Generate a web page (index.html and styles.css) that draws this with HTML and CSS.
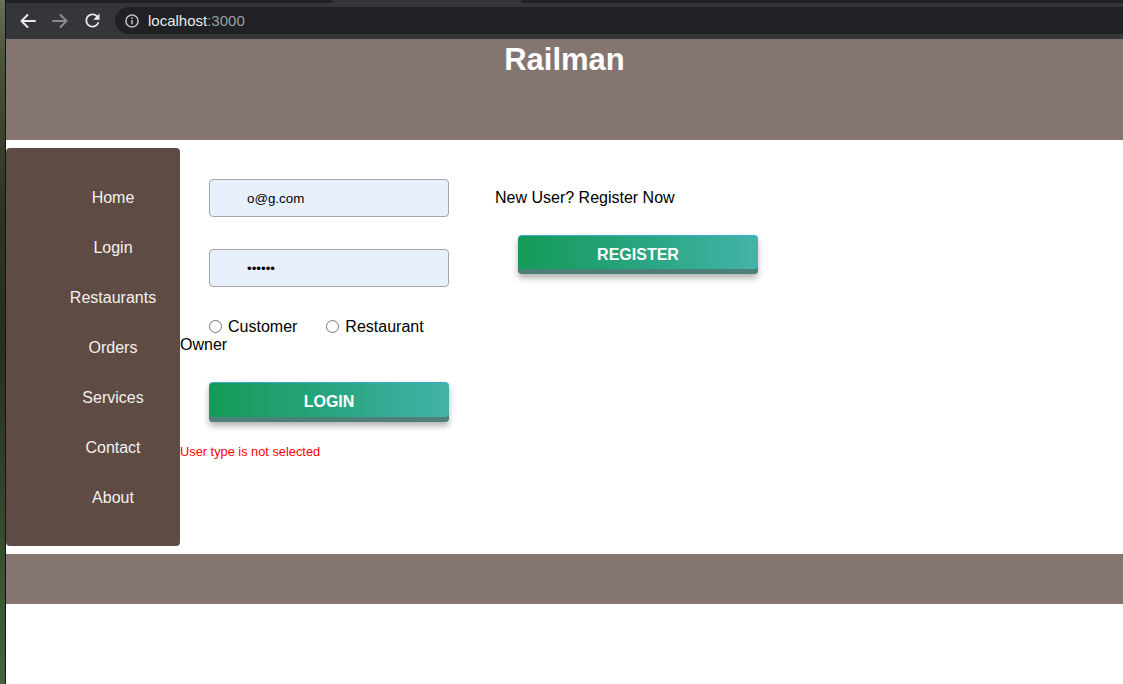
FILE: index.html
```html
<!DOCTYPE html>
<html lang="en">
<head>
<meta charset="utf-8">
<title>Railman</title>
<link rel="stylesheet" href="styles.css">
</head>
<body>
<div class="desktop">
  <div class="wallpaper"></div>
  <div class="window">
    <div class="tabstrip">
      <div class="tab-dark tab-left"></div>
      <div class="tab-active"></div>
      <div class="tab-dark tab-right"></div>
    </div>
    <div class="toolbar">
      <div class="tb-btn">
        <svg width="20" height="20" viewBox="0 0 20 20"><path d="M17 10H3.5M9.5 4L3.5 10l6 6" fill="none" stroke="#e8eaed" stroke-width="2" stroke-linecap="round" stroke-linejoin="round"/></svg>
      </div>
      <div class="tb-btn">
        <svg width="20" height="20" viewBox="0 0 20 20"><path d="M3 10h13.5M10.5 4l6 6-6 6" fill="none" stroke="#8a8b8e" stroke-width="2" stroke-linecap="round" stroke-linejoin="round"/></svg>
      </div>
      <div class="tb-btn">
        <svg width="21" height="21" viewBox="0 0 24 24"><path d="M17.65 6.35C16.2 4.9 14.21 4 12 4c-4.42 0-7.99 3.58-7.99 8s3.57 8 7.99 8c3.73 0 6.84-2.55 7.73-6h-2.08c-.82 2.33-3.04 4-5.65 4-3.31 0-6-2.69-6-6s2.69-6 6-6c1.66 0 3.14.69 4.22 1.78L13 11h7V4l-2.35 2.35z" fill="#e8eaed"/></svg>
      </div>
      <div class="omnibox">
        <svg class="info" width="14" height="14" viewBox="0 0 14 14"><circle cx="7" cy="7" r="6.1" fill="none" stroke="#bdc1c6" stroke-width="1.5"/><rect x="6.25" y="6" width="1.5" height="4.3" fill="#bdc1c6"/><circle cx="7" cy="4.2" r="0.9" fill="#bdc1c6"/></svg>
        <span class="url-host">localhost</span><span class="url-port">:3000</span>
      </div>
    </div>
    <div class="page">
      <header class="site-header">
        <h1 class="brand">Railman</h1>
      </header>
      <div class="main">
        <nav class="sidebar">
          <ul class="nav-list">
            <li>Home</li>
            <li>Login</li>
            <li>Restaurants</li>
            <li>Orders</li>
            <li>Services</li>
            <li>Contact</li>
            <li>About</li>
          </ul>
        </nav>
        <div class="login-col">
          <input class="field" type="text" value="o@g.com">
          <input class="field field-gap" type="password" value="123456">
          <div class="radio-group"><input class="radio r1" type="radio" name="ut">Customer<input class="radio r2" type="radio" name="ut">Restaurant Owner</div>
          <button class="btn btn-login">LOGIN</button>
          <div class="error">User type is not selected</div>
        </div>
        <div class="register-col">
          <div class="register-text">New User? Register Now</div>
          <button class="btn btn-register">REGISTER</button>
        </div>
      </div>
      <footer class="site-footer"></footer>
    </div>
  </div>
</div>
</body>
</html>
```
FILE: styles.css
```css
* { box-sizing: border-box; }

html, body {
  margin: 0;
  padding: 0;
  background: #ffffff;
  font-family: "Liberation Sans", Arial, sans-serif;
}

.desktop {
  display: flex;
  width: 1123px;
  height: 684px;
  overflow: hidden;
}

.wallpaper {
  width: 6px;
  flex: none;
  background: linear-gradient(180deg, #68705c 0%, #4a5638 8%, #2c3522 30%, #26301e 50%, #33442a 72%, #3d5a33 90%, #45653a 100%);
  border-right: 1px solid #141414;
}

.window {
  flex: 1;
  display: flex;
  flex-direction: column;
  overflow: hidden;
  background: #ffffff;
}

.tabstrip {
  height: 3px;
  display: flex;
  background: #35363a;
}

.tab-dark {
  background: #202124;
  height: 3px;
}

.tab-left {
  width: 327px;
  border-radius: 0 0 5px 0;
}

.tab-active {
  width: 188px;
}

.tab-right {
  flex: 1;
  border-radius: 0 0 0 5px;
}

.toolbar {
  height: 36px;
  padding: 0 0 1px 6px;
  background: #35363a;
  display: flex;
  align-items: center;
}

.tb-btn {
  width: 32px;
  height: 28px;
  display: flex;
  align-items: center;
  justify-content: center;
  flex: none;
}

.omnibox {
  flex: 1;
  margin-left: 7px;
  margin-right: -30px;
  height: 27px;
  border-radius: 14px;
  background: #202124;
  display: flex;
  align-items: center;
  padding-left: 10px;
  font-size: 15px;
}

.info {
  margin-right: 9px;
  flex: none;
}

.url-host { color: #e8eaed; }
.url-port { color: #9aa0a6; }

.page {
  flex: 1;
  background: #ffffff;
}

.site-header {
  height: 101px;
  background: #857571;
  padding-top: 3px;
}

.brand {
  margin: 0;
  text-align: center;
  color: #ffffff;
  font-size: 31px;
  font-weight: bold;
}

.main {
  display: flex;
  align-items: flex-start;
  margin: 8px 0;
}

.sidebar {
  width: 174px;
  flex: none;
  background: #5d4b44;
  border-radius: 4px;
  padding: 25px 0 23px 40px;
}

.nav-list {
  list-style: none;
  margin: 0;
  padding: 0;
}

.nav-list li {
  height: 50px;
  line-height: 50px;
  text-align: center;
  color: #f4f1f0;
  font-size: 16px;
}

.login-col {
  width: 290px;
  flex: none;
  padding-top: 31px;
}

.field {
  display: block;
  width: 240px;
  height: 38px;
  margin: 0 0 0 29px;
  border: 1px solid #a3a3a8;
  border-radius: 4px;
  background: #e8f0fe;
  padding: 0 0 0 37px;
  font-family: "Liberation Sans", Arial, sans-serif;
  font-size: 13.33px;
  color: #000000;
}

.field-gap {
  margin-top: 32px;
}

.radio-group {
  width: 270px;
  margin-top: 31px;
  font-size: 16px;
  color: #000000;
}

.radio {
  width: 13px;
  height: 13px;
  margin: 0 6px 0 0;
  vertical-align: -1px;
}

.r1 { margin-left: 29px; }
.r2 { margin-left: 29px; margin-right: 6px; }

.btn {
  display: block;
  width: 240px;
  height: 40px;
  border: none;
  border-top: 1px solid #3aabd0;
  border-radius: 4px;
  background: linear-gradient(90deg, #159a58 0%, #2aa683 55%, #43b3a8 100%);
  box-shadow: inset 0 -5px 0 #4e7f79, 0 4px 6px rgba(0, 0, 0, 0.3);
  color: #ffffff;
  font-family: "Liberation Sans", Arial, sans-serif;
  font-weight: bold;
  font-size: 16px;
  padding: 0 0 2px 0;
}

.btn-login {
  margin: 28px 0 0 29px;
}

.error {
  margin-top: 22px;
  font-size: 12.8px;
  color: #ff0000;
}

.register-col {
  padding: 41px 0 0 25px;
}

.register-text {
  font-size: 16px;
  color: #000000;
}

.btn-register {
  margin: 28px 0 0 23px;
  height: 39px;
  padding: 0;
}

.site-footer {
  height: 50px;
  background: #857571;
}
```
